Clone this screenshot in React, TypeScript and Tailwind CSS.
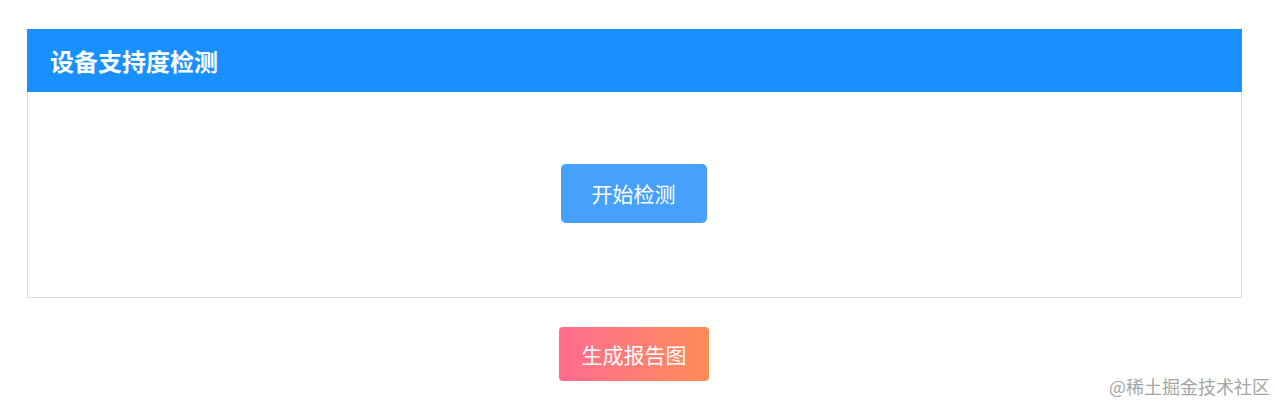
const font = { fontFamily: '"Noto Sans CJK SC", "Noto Sans", sans-serif' };

function App() {
    return (
        <main className="relative w-[1276px] h-[403px] bg-white overflow-hidden" style={font}>
            <div className="pt-[29px] pl-[27px]">
                {/* detection card */}
                <div className="w-[1215px] border border-[#e0e0e0]">
                    <div className="h-[63px] -mx-px -mt-px bg-[#1890ff] flex items-center pl-[23px]">
                        <h2 className="text-[24px] font-bold text-white leading-none">设备支持度检测</h2>
                    </div>
                    <div className="h-[205px] flex items-center justify-center pb-[2px] pr-[2px]">
                        <button className="w-[146px] h-[59px] rounded-[5px] bg-[#46a0fc] text-white text-[21px] leading-none">
                            开始检测
                        </button>
                    </div>
                </div>

                {/* report button */}
                <div className="w-[1214px] flex justify-center mt-[29px]">
                    <button className="w-[150px] h-[54px] rounded-[4px] bg-gradient-to-r from-[#ff6b8d] to-[#ff8c57] text-white text-[21px] leading-none">
                        生成报告图
                    </button>
                </div>
            </div>

            {/* watermark */}
            <span className="absolute right-[6px] bottom-[8px] text-[18px] leading-none text-[#a5a5a5]">
                @稀土掘金技术社区
            </span>
        </main>
    );
}

export default App;
